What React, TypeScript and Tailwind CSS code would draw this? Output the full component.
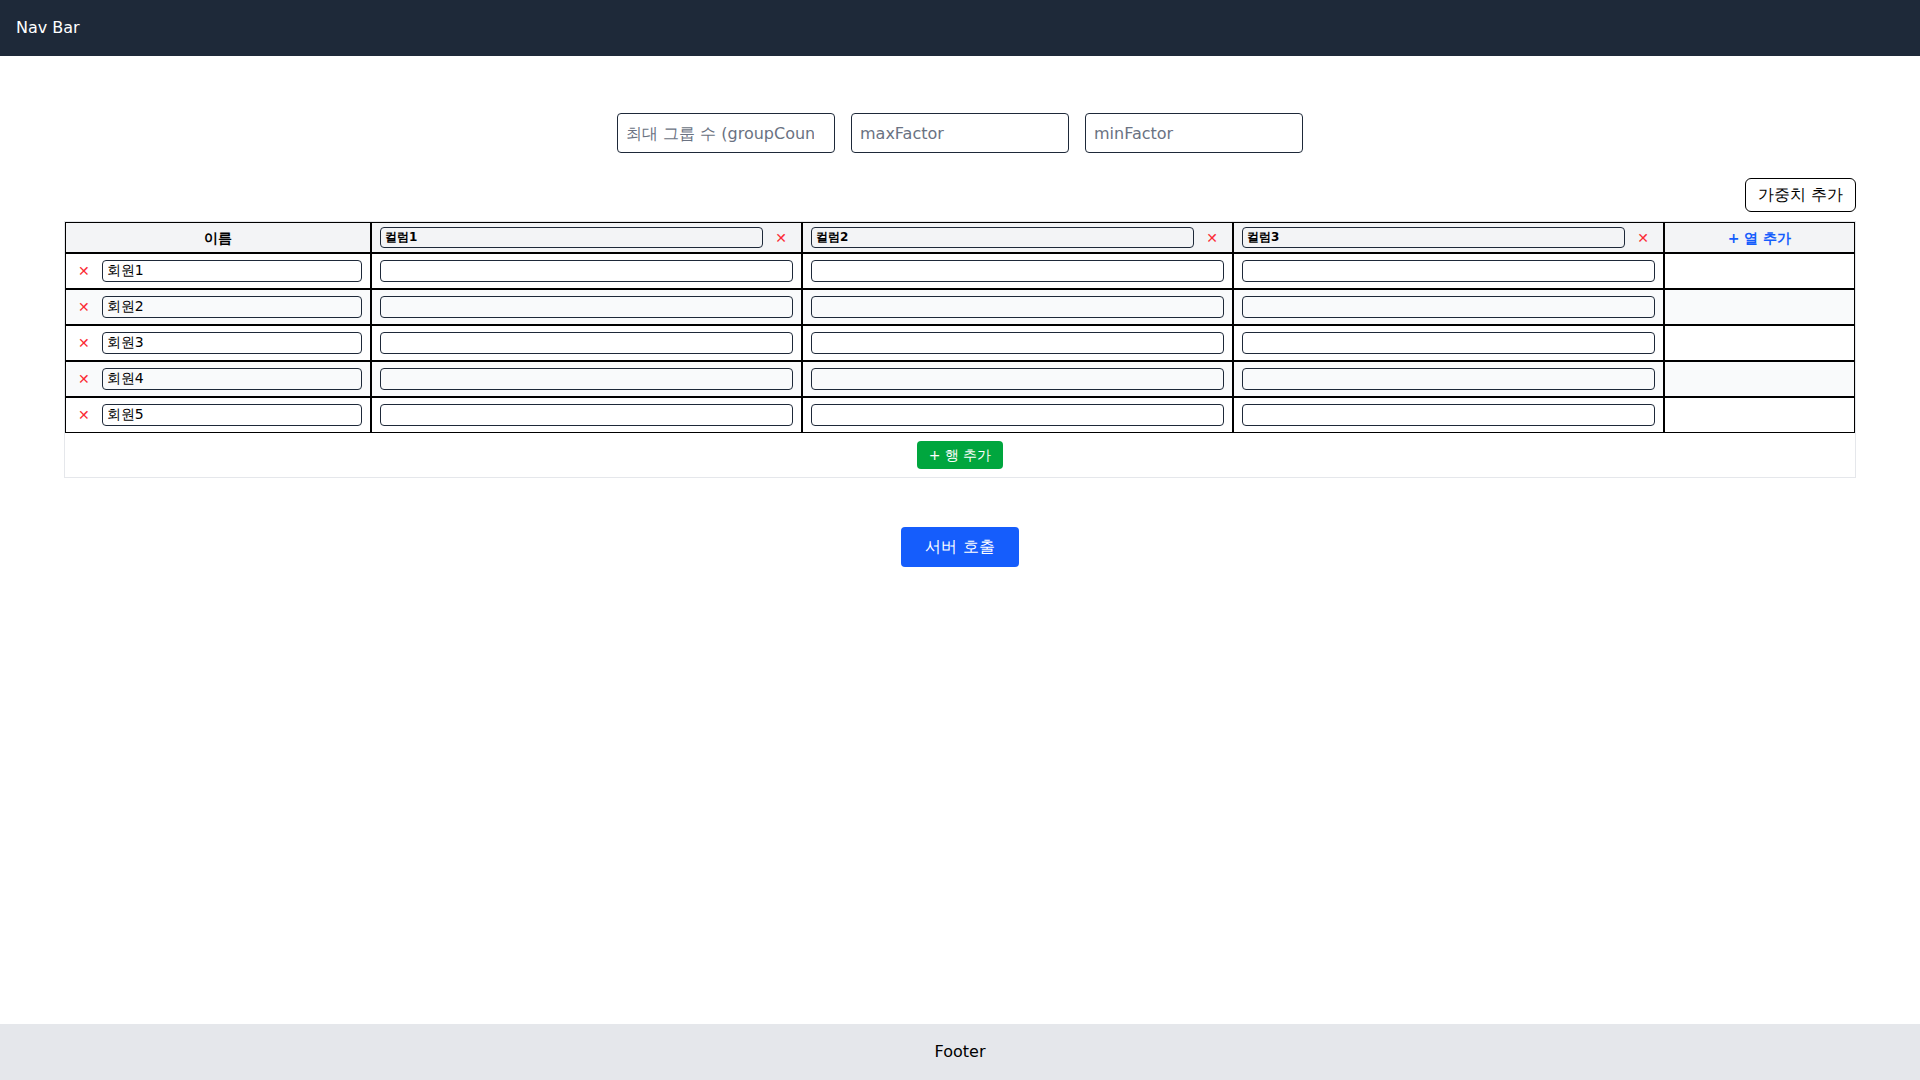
import { useState } from 'react'

const font = { fontFamily: '"DejaVu Sans", sans-serif' }

export default function App() {
  const [columns] = useState(['컬럼1', '컬럼2', '컬럼3'])
  const [rows] = useState(['회원1', '회원2', '회원3', '회원4', '회원5'])

  return (
    <div className="min-h-screen flex flex-col bg-white text-black" style={font}>
      <nav className="h-14 shrink-0 bg-gray-800 text-white flex items-center px-4">
        <span className="text-base">Nav Bar</span>
      </nav>

      <main className="flex-1 px-16 pt-[57px]">
        <div className="flex justify-center gap-4">
          <input
            placeholder="최대 그룹 수 (groupCount)"
            className="w-[218px] h-10 pl-2 pr-5 border border-gray-800 rounded text-base placeholder:text-gray-500 outline-none"
          />
          <input
            placeholder="maxFactor"
            className="w-[218px] h-10 px-2 border border-gray-800 rounded text-base placeholder:text-gray-500 outline-none"
          />
          <input
            placeholder="minFactor"
            className="w-[218px] h-10 px-2 border border-gray-800 rounded text-base placeholder:text-gray-500 outline-none"
          />
        </div>

        <div className="flex justify-end mt-[25px]">
          <button className="h-[34px] px-3 border border-black rounded-md text-base">가중치 추가</button>
        </div>

        <div className="mt-[9px] border border-gray-200">
          <table className="w-full border-separate border-spacing-0 table-fixed">
            <colgroup>
              <col className="w-[306px]" />
              <col />
              <col />
              <col />
              <col className="w-[191px]" />
            </colgroup>
            <thead>
              <tr className="bg-gray-100">
                <th className="border border-black py-1 text-sm font-bold text-center">이름</th>
                {columns.map(c => (
                  <th key={c} className="border border-black py-1 pl-2 pr-3.5">
                    <div className="flex items-center gap-3">
                      <input
                        defaultValue={c}
                        className="block flex-1 min-w-0 h-[21px] px-1 border border-gray-800 rounded text-xs font-bold bg-transparent outline-none"
                      />
                      <button className="text-red-500 text-sm leading-none">✕</button>
                    </div>
                  </th>
                ))}
                <th className="border border-black py-1 text-sm font-bold text-blue-600 text-center">+ 열 추가</th>
              </tr>
            </thead>
            <tbody>
              {rows.map((r, i) => (
                <tr key={r} className={i % 2 === 1 ? 'bg-gray-50' : 'bg-white'}>
                  <td className="border border-black py-[6px] pl-3 pr-2">
                    <div className="flex items-center gap-3">
                      <button className="text-red-500 text-sm leading-none">✕</button>
                      <input
                        defaultValue={r}
                        className="block flex-1 min-w-0 h-[22px] px-1 border border-gray-800 rounded text-sm bg-transparent outline-none"
                      />
                    </div>
                  </td>
                  {columns.map(c => (
                    <td key={c} className="border border-black py-[6px] px-2">
                      <input className="block w-full h-[22px] px-1 border border-gray-800 rounded text-sm bg-transparent outline-none" />
                    </td>
                  ))}
                  <td className="border border-black" />
                </tr>
              ))}
            </tbody>
          </table>
          <div className="flex justify-center py-2">
            <button className="h-7 px-3 bg-green-600 text-white text-sm rounded">+ 행 추가</button>
          </div>
        </div>

        <div className="flex justify-center mt-[49px]">
          <button className="h-10 px-6 bg-blue-600 text-white text-base rounded">서버 호출</button>
        </div>
      </main>

      <footer className="h-14 shrink-0 bg-gray-200 flex items-center justify-center">
        <span className="text-base">Footer</span>
      </footer>
    </div>
  )
}
